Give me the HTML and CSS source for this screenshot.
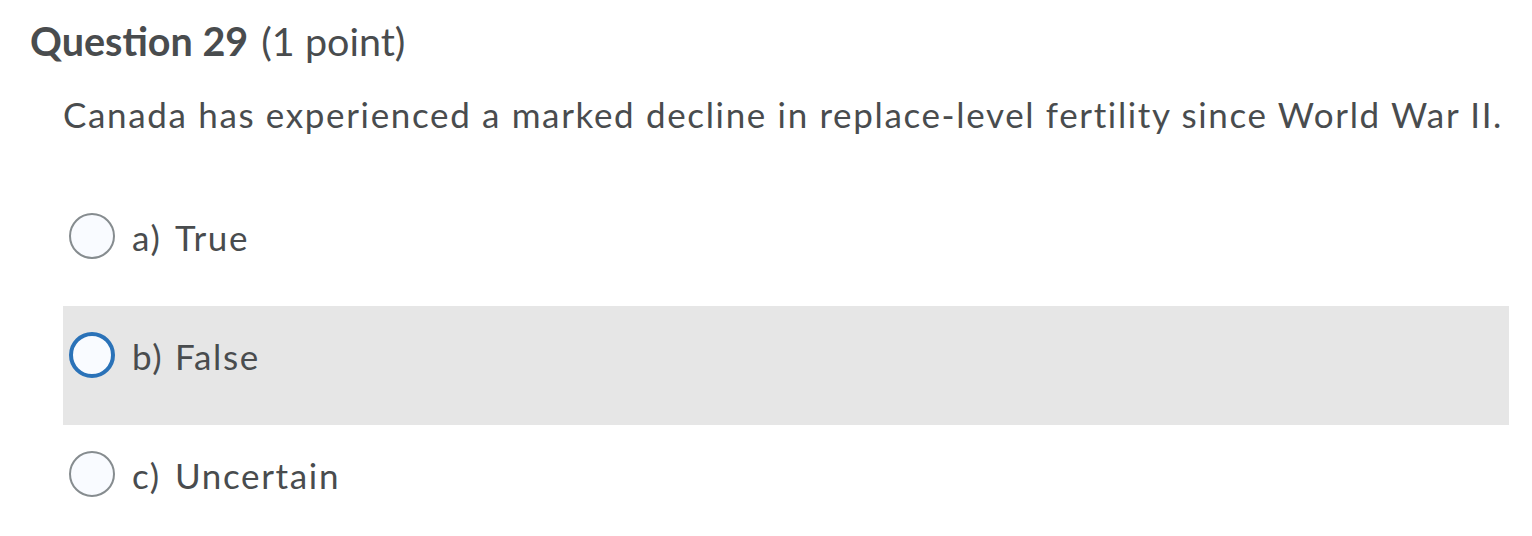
FILE: index.html
```html
<!DOCTYPE html>
<html lang="en">
<head>
<meta charset="utf-8">
<title>Question 29</title>
<link rel="stylesheet" href="styles.css">
</head>
<body>
<div class="question">
  <h2 class="q-title"><strong>Question 29</strong> <span class="q-points">(1 point)</span></h2>
  <p class="q-text">Canada has experienced a marked decline in replace-level fertility since World War II.</p>
  <div class="options">
    <label class="option">
      <span class="radio"></span>
      <span class="opt-label"><span class="opt-key">a)</span>True</span>
    </label>
    <label class="option option-hover">
      <span class="radio radio-focus"></span>
      <span class="opt-label"><span class="opt-key">b)</span>False</span>
    </label>
    <label class="option">
      <span class="radio"></span>
      <span class="opt-label"><span class="opt-key">c)</span>Uncertain</span>
    </label>
  </div>
</div>
</body>
</html>
```

FILE: styles.css
```css
html, body {
  margin: 0;
  padding: 0;
  background: #ffffff;
}

body {
  font-family: Lato, "Open Sans", "Liberation Sans", sans-serif;
  color: #494c4e;
}

.question {
  padding: 17px 23px 0 30px;
}

.q-title {
  margin: 0;
  font-size: 39.5px;
  line-height: 1.2;
  font-weight: 400;
}

.q-title strong {
  font-weight: 700;
  margin-right: 3px;
}

.q-text {
  margin: 29px 0 0 33px;
  font-size: 35px;
  line-height: 1.2;
  letter-spacing: 1.65px;
}

.options {
  margin: 52px 0 0 33px;
  display: flex;
  flex-direction: column;
}

.option {
  display: flex;
  align-items: center;
  gap: 17px;
  padding: 26px 0 47px 6px;
  height: 46px;
  font-size: 35px;
  line-height: 1.2;
  letter-spacing: 1.65px;
}

.opt-label {
  position: relative;
  top: 1px;
  white-space: nowrap;
}

.opt-key {
  display: inline-block;
  min-width: 43px;
}

.option-hover {
  background: #e6e6e6;
}

.radio {
  box-sizing: border-box;
  width: 46px;
  height: 46px;
  border-radius: 50%;
  border: 2px solid #868c8f;
  background: #f9fbff;
  flex: none;
}

.radio-focus {
  border: 4px solid #2a72b8;
}
```
